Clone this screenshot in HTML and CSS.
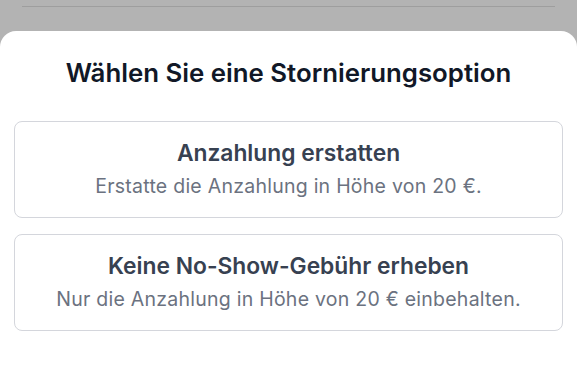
FILE: index.html
```html
<!DOCTYPE html>
<html lang="de">
  <head>
    <meta charset="UTF-8" />
    <meta name="viewport" content="width=device-width, initial-scale=1.0" />
    <title>Stornierung</title>
    <link rel="stylesheet" href="styles.css">
  </head>
  <body>
    <div class="backdrop">
      <div class="backdrop-line"></div>
    </div>

    <div class="sheet">
      <h2 class="sheet-title">Wählen Sie eine Stornierungsoption</h2>

      <div class="options">
        <button class="option">
          <span class="option-title">Anzahlung erstatten</span>
          <span class="option-text">Erstatte die Anzahlung in Höhe von 20 €.</span>
        </button>
        <button class="option">
          <span class="option-title">Keine No-Show-Gebühr erheben</span>
          <span class="option-text">Nur die Anzahlung in Höhe von 20 € einbehalten.</span>
        </button>
      </div>
    </div>
  </body>
</html>
```

FILE: styles.css
```css
* {
  box-sizing: border-box;
  margin: 0;
  padding: 0;
}
html, body {
  height: 100%;
}
body {
  font-family: Inter, "Noto Sans", sans-serif;
  background: #b3b3b3;
  overflow: hidden;
  display: flex;
  flex-direction: column;
}
.backdrop {
  height: 31px;
  padding: 6px 22px 0 22px;
}
.backdrop-line {
  height: 1px;
  background: #9e9e9e;
}
.sheet {
  flex-grow: 1;
  background: white;
  border-radius: 16px 16px 0 0;
  padding: 26px 14px 0 14px;
}
.sheet-title {
  text-align: center;
  font-size: 25.8px;
  line-height: 32px;
  font-weight: 600;
  color: #111827;
  margin-bottom: 32px;
}
.options {
  display: flex;
  flex-direction: column;
  gap: 16px;
}
.option {
  display: flex;
  flex-direction: column;
  align-items: center;
  gap: 7px;
  height: 97px;
  justify-content: center;
  padding-bottom: 1px;
  background: white;
  border: 1px solid #d4d6dc;
  border-radius: 8px;
  font-family: inherit;
  cursor: pointer;
}
.option-title {
  font-size: 22.8px;
  line-height: 26px;
  font-weight: 600;
  color: #374151;
}
.option-text {
  font-size: 19.5px;
  line-height: 26px;
  letter-spacing: 0.25px;
  color: #6b7280;
}
```
